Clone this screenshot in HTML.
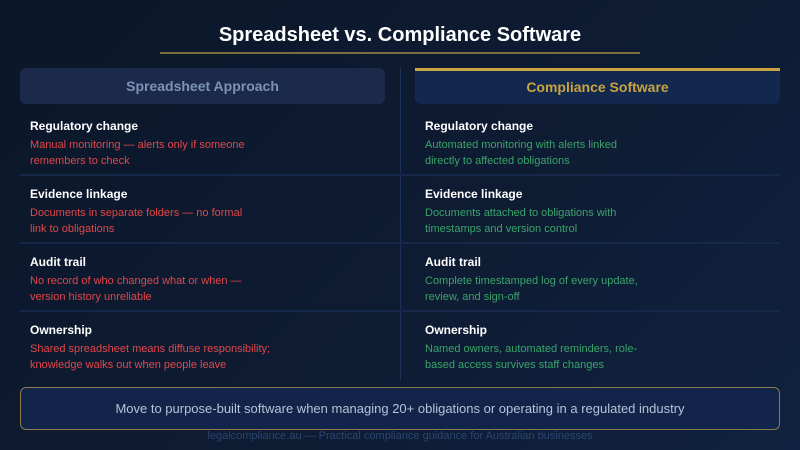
<!DOCTYPE html>
<html><head><style>
*{margin:0;padding:0;box-sizing:border-box}
body{width:800px;height:450px;overflow:hidden;background:linear-gradient(135deg,#0b1628 0%,#0e1c34 60%,#112240 100%);font-family:"Liberation Sans",sans-serif;position:relative}
.a{position:absolute}
h1{position:absolute;top:24px;left:0;width:800px;text-align:center;color:#fff;font-size:20px;font-weight:bold}
.ul{left:160px;top:52px;width:480px;height:2px;background:#7d6d3e}
.hd{top:68px;height:36px;width:365px;border-radius:6px;text-align:center;line-height:36px;font-size:14px;font-weight:bold}
.vd{left:400px;top:68px;width:1px;height:312px;background:#1c3256}
.sep{left:20px;width:760px;height:2px;background:#15284a}
.lb{color:#fff;font-size:12px;font-weight:bold}
.d{font-size:11px;line-height:16px;margin-top:4px}
.r{color:#e2474a}.g{color:#3aa46a}
.box{left:20px;top:387px;width:760px;height:43px;border:1px solid #8a7a4c;border-radius:6px;background:#12244a;text-align:center;line-height:41px;color:#b6c2d8;font-size:13px}
.ft{top:430px;left:0;width:800px;text-align:center;color:#2a4670;font-size:11px}
</style></head><body>
<h1>Spreadsheet vs. Compliance Software</h1>
<div class="a ul"></div>
<div class="a hd" style="left:20px;background:#1b2a4b;color:#7d93b5">Spreadsheet Approach</div>
<div class="a hd" style="left:415px;background:#12284e;color:#c9a441;border-top:3px solid #c9a441;border-radius:0 0 6px 6px;line-height:32px">Compliance Software</div>
<div class="a vd"></div>
<div class="a sep" style="top:174px"></div>
<div class="a sep" style="top:242px"></div>
<div class="a sep" style="top:310px"></div>

<div class="a" style="left:30px;top:119px"><div class="lb">Regulatory change</div><div class="d r">Manual monitoring — alerts only if someone<br>remembers to check</div></div>
<div class="a" style="left:425px;top:119px"><div class="lb">Regulatory change</div><div class="d g">Automated monitoring with alerts linked<br>directly to affected obligations</div></div>

<div class="a" style="left:30px;top:187px"><div class="lb">Evidence linkage</div><div class="d r">Documents in separate folders — no formal<br>link to obligations</div></div>
<div class="a" style="left:425px;top:187px"><div class="lb">Evidence linkage</div><div class="d g">Documents attached to obligations with<br>timestamps and version control</div></div>

<div class="a" style="left:30px;top:255px"><div class="lb">Audit trail</div><div class="d r">No record of who changed what or when —<br>version history unreliable</div></div>
<div class="a" style="left:425px;top:255px"><div class="lb">Audit trail</div><div class="d g">Complete timestamped log of every update,<br>review, and sign-off</div></div>

<div class="a" style="left:30px;top:323px"><div class="lb">Ownership</div><div class="d r">Shared spreadsheet means diffuse responsibility;<br>knowledge walks out when people leave</div></div>
<div class="a" style="left:425px;top:323px"><div class="lb">Ownership</div><div class="d g">Named owners, automated reminders, role-<br>based access survives staff changes</div></div>

<div class="a box">Move to purpose-built software when managing 20+ obligations or operating in a regulated industry</div>
<div class="a ft">legalcompliance.au — Practical compliance guidance for Australian businesses</div>
</body></html>
